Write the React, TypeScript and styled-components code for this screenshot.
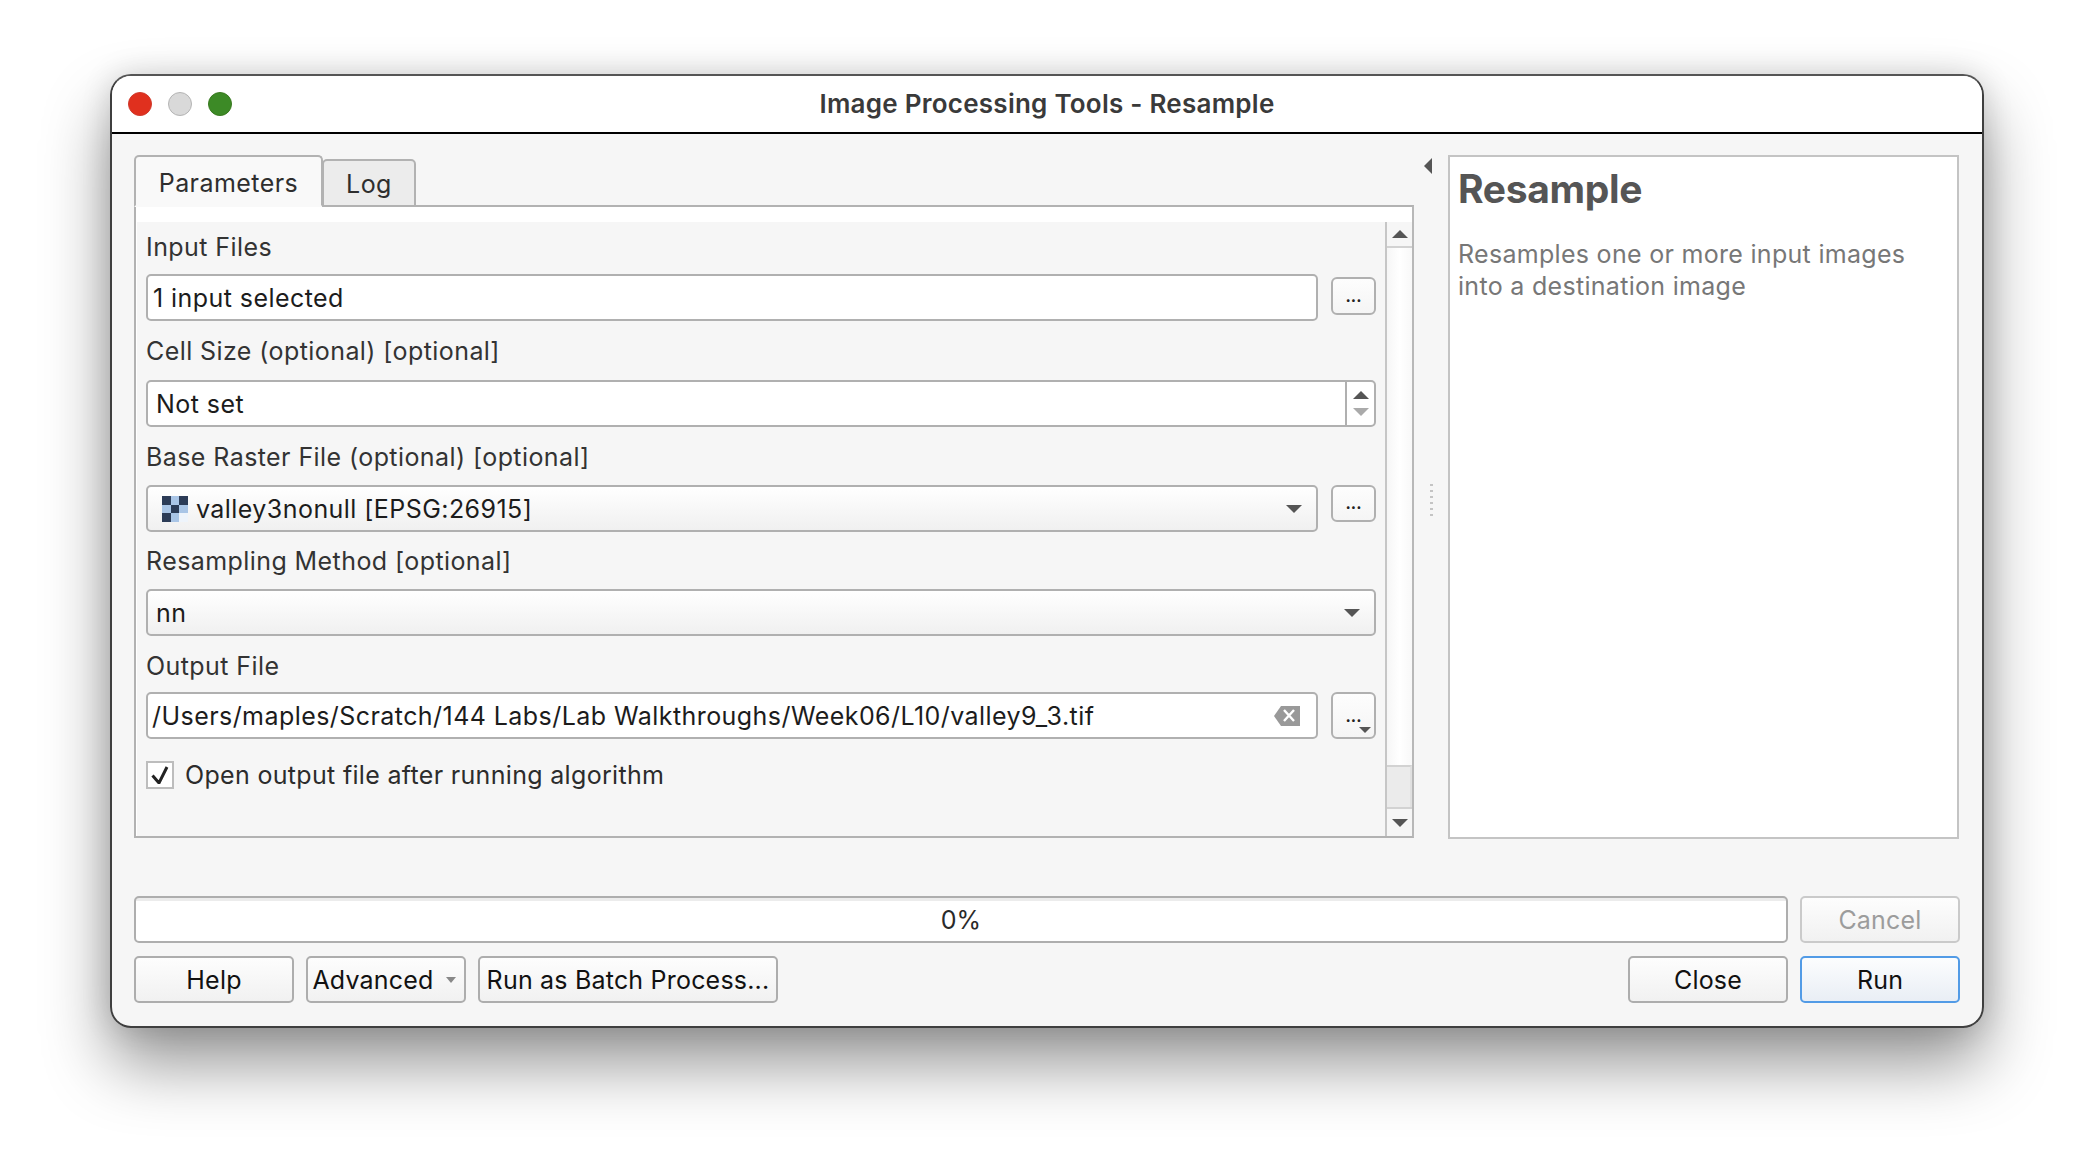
import styled, { createGlobalStyle } from "styled-components";

const GlobalStyle = createGlobalStyle`
  html, body {
    margin: 0;
    background: #fff;
  }
  body {
    font-family: Inter, "Liberation Sans", sans-serif;
    color: #222;
  }
`;

const Page = styled.div`
  width: 2094px;
  height: 1174px;
  box-sizing: border-box;
  padding: 74px 0 0 110px;
  overflow: hidden;
`;

const Window = styled.div`
  width: 1874px;
  height: 954px;
  box-sizing: border-box;
  border: 2px solid #3f3f3f;
  border-top-color: #555;
  border-radius: 21px;
  background: #f6f6f6;
  overflow: hidden;
`;

const WindowShadow = styled.div`
  width: 1874px;
  border-radius: 21px;
  box-shadow: 0 36px 66px rgba(0, 0, 0, 0.42), 0 0 30px rgba(0, 0, 0, 0.14);
`;

const TitleBar = styled.div`
  height: 56px;
  display: grid;
  grid-template-columns: 1fr auto 1fr;
  align-items: center;
  background: #fff;
  border-bottom: 2px solid #000;
  padding-left: 16px;
`;

const Lights = styled.div`
  display: flex;
  gap: 16px;
`;

const Light = styled.span<{ $fill: string; $edge: string }>`
  width: 24px;
  height: 24px;
  box-sizing: border-box;
  border-radius: 50%;
  background: ${(p) => p.$fill};
  border: 1.5px solid ${(p) => p.$edge};
`;

const Title = styled.div`
  font-size: 26px;
  font-weight: 600;
  color: #3a3a3a;
  white-space: nowrap;
  letter-spacing: 0.25px;
  margin: -2px 16px 0 0;
`;

const Body = styled.div`
  padding: 21px 23px 0 22px;
`;

const Main = styled.div`
  display: flex;
  align-items: flex-start;
  height: 683px;
`;

const Left = styled.div`
  width: 1280px;
  height: 683px;
  display: flex;
  flex-direction: column;
`;

const Tabs = styled.div`
  display: flex;
  align-items: flex-end;
  height: 52px;
  margin-bottom: -2px;
  position: relative;
  z-index: 1;
`;

const Tab = styled.div<{ $active?: boolean }>`
  box-sizing: border-box;
  border: 2px solid #b2b2b2;
  border-radius: 5px 5px 0 0;
  font-size: 25px;
  letter-spacing: 0.45px;
  color: #2e2e2e;
  display: flex;
  align-items: center;
  justify-content: center;
  padding-top: ${(p) => (p.$active ? "3px" : "2px")};
  width: ${(p) => (p.$active ? "189px" : "94px")};
  height: ${(p) => (p.$active ? "52px" : "48px")};
  background: ${(p) => (p.$active ? "#f9f9f9" : "#ececec")};
  border-bottom-color: ${(p) => (p.$active ? "#f9f9f9" : "#b2b2b2")};
  margin-left: ${(p) => (p.$active ? "0" : "-1px")};
`;

const Pane = styled.div`
  flex: 1;
  box-sizing: border-box;
  border: 2px solid #b2b2b2;
  border-right-color: #b8b8b8;
  background: #fff;
  padding: 15px 0 0 1px;
  display: flex;
`;

const Form = styled.div`
  flex: 1;
  box-sizing: border-box;
  padding: 10px 9px 0 9px;
  background: #f6f6f6;
`;

const Field = styled.div<{ $top?: number }>`
  margin-top: ${(p) => p.$top ?? 0}px;
`;

const Label = styled.div<{ $gap: number }>`
  height: 30px;
  line-height: 30px;
  font-size: 25px;
  letter-spacing: 0.42px;
  color: #333;
  margin-bottom: ${(p) => p.$gap}px;
  white-space: nowrap;
`;

const Row = styled.div`
  display: flex;
  align-items: flex-start;
  gap: 13px;
`;

const Box = styled.div<{ $pad?: number }>`
  flex: 1;
  min-width: 0;
  height: 47px;
  box-sizing: border-box;
  border: 2px solid #b0b0b0;
  border-radius: 5px;
  background: #fff;
  display: flex;
  align-items: center;
  padding-left: ${(p) => p.$pad ?? 8}px;
  font-size: 25px;
  letter-spacing: 0.44px;
  color: #1c1c1c;
  white-space: nowrap;
`;

const ComboBox = styled(Box)`
  background: linear-gradient(#fff, #f0f0f0);
  justify-content: space-between;
  padding-right: 14px;
`;

const SpinBox = styled(Box)`
  padding-right: 0;
  justify-content: space-between;
`;

const Spinner = styled.div`
  width: 27px;
  height: 100%;
  border-left: 2px solid #b0b0b0;
  display: flex;
  flex-direction: column;
  align-items: center;
  justify-content: center;
  gap: 9px;
`;

const ComboText = styled.span`
  display: flex;
  align-items: center;
  gap: 8px;
`;

const Caret = styled.span<{ $up?: boolean; $w: number; $h: number; $color: string }>`
  display: block;
  flex: none;
  width: 0;
  height: 0;
  border-left: ${(p) => p.$w / 2}px solid transparent;
  border-right: ${(p) => p.$w / 2}px solid transparent;
  ${(p) => (p.$up ? "border-bottom" : "border-top")}: ${(p) => p.$h}px solid ${(p) => p.$color};
`;

const ToolButton = styled.div<{ $h: number; $top?: number; $bottom: number }>`
  position: relative;
  flex: none;
  width: 45px;
  height: ${(p) => p.$h}px;
  margin-top: ${(p) => p.$top ?? 0}px;
  box-sizing: border-box;
  border: 2px solid #b0b0b0;
  border-radius: 6px;
  background: linear-gradient(#fdfdfd, #f5f5f5);
  display: flex;
  align-items: flex-end;
  justify-content: center;
  padding-bottom: ${(p) => p.$bottom}px;
  font-size: 16px;
  font-weight: 700;
  line-height: 1;
  color: #222;
`;

const MenuCaret = styled.span`
  position: absolute;
  right: 3px;
  bottom: 4px;
`;

const ClearIcon = styled.svg`
  flex: none;
  width: 26px;
  height: 20px;
  margin-right: 16px;
`;

const PathText = styled.span`
  flex: 1;
  min-width: 0;
`;

const CheckRow = styled.div`
  display: flex;
  align-items: center;
  gap: 11px;
  margin-top: 21px;
  font-size: 25px;
  letter-spacing: 0.32px;
  color: #2c2c2c;
`;

const CheckMark = styled.div`
  width: 28px;
  height: 28px;
  box-sizing: border-box;
  border: 2px solid #bdbdbd;
  background: #fff;
  display: flex;
  align-items: center;
  justify-content: center;
`;

const ScrollBar = styled.div`
  width: 27px;
  flex: none;
  border-left: 2px solid #c6c6c6;
  box-sizing: border-box;
  display: flex;
  flex-direction: column;
  background: linear-gradient(90deg, #f6f6f6, #fff 50%, #f8f8f8);
`;

const ScrollEnd = styled.div<{ $bottom?: boolean }>`
  height: ${(p) => (p.$bottom ? "29px" : "26px")};
  flex: none;
  display: flex;
  align-items: center;
  justify-content: center;
  box-sizing: border-box;
  background: #f6f6f6;
  ${(p) => (p.$bottom ? "border-top" : "border-bottom")}: 2px solid #d2d2d2;
`;

const ScrollTrack = styled.div`
  flex: 1;
  display: flex;
  flex-direction: column;
  justify-content: flex-end;
`;

const ScrollThumb = styled.div`
  height: 42px;
  box-sizing: border-box;
  background: #ebebeb;
  border-top: 2px solid #d2d2d2;
  border-right: 2px solid #e0e0e0;
`;

const Splitter = styled.div`
  width: 34px;
  flex: none;
  display: flex;
  flex-direction: column;
  align-items: center;
`;

const CollapseArrow = styled.span`
  display: block;
  width: 0;
  height: 0;
  margin: 3px 6px 0 0;
  border-top: 8px solid transparent;
  border-bottom: 8px solid transparent;
  border-right: 8px solid #555;
`;

const GripDots = styled.span`
  width: 3px;
  height: 32px;
  margin-top: 310px;
  background: repeating-linear-gradient(#c4c4c4 0 2px, transparent 2px 6px);
`;

const Side = styled.div`
  flex: 1;
  height: 684px;
  box-sizing: border-box;
  border: 2px solid #c4c4c4;
  background: #fff;
  padding: 9px 8px;
`;

const SideTitle = styled.h1`
  margin: 0;
  font-size: 39px;
  line-height: 46px;
  font-weight: 700;
  letter-spacing: -0.35px;
  color: #555;
`;

const SideText = styled.p`
  margin: 26px 0 0;
  font-size: 25px;
  line-height: 32px;
  letter-spacing: 0.3px;
  color: #777;
`;

const Footer = styled.div`
  margin: 58px -1px 0 0;
  display: flex;
  flex-direction: column;
  gap: 13px;
`;

const FooterRow = styled.div`
  display: flex;
  gap: 12px;
`;

const Progress = styled.div`
  flex: 1;
  height: 47px;
  box-sizing: border-box;
  border: 2px solid #aeaeae;
  border-radius: 5px;
  background: linear-gradient(#ececec 0 3px, #fff 3px);
  display: flex;
  align-items: center;
  justify-content: center;
  padding-top: 1px;
  font-size: 25px;
  letter-spacing: 0.2px;
  color: #2a2a2a;
`;

const Button = styled.div<{ $w: number; $tone?: "run" | "off" }>`
  width: ${(p) => p.$w}px;
  height: 47px;
  box-sizing: border-box;
  border: 2px solid
    ${(p) => (p.$tone === "run" ? "#529be6" : p.$tone === "off" ? "#cacaca" : "#adadad")};
  border-radius: 5px;
  background: ${(p) =>
    p.$tone === "run" ? "linear-gradient(#fcfdfe, #e9eef5)" : "linear-gradient(#fdfdfd, #f1f1f1)"};
  color: ${(p) => (p.$tone === "off" ? "#9c9c9c" : "#111")};
  display: flex;
  align-items: center;
  justify-content: center;
  gap: 12px;
  padding-top: 1px;
  font-size: 25px;
  letter-spacing: 0.2px;
  white-space: nowrap;
`;

const MenuButton = styled(Button)`
  padding-right: 4px;
`;

const Spacer = styled.div`
  flex: 1;
`;

const RasterIcon = () => (
  <svg width="26" height="26" viewBox="0 0 3 3" shapeRendering="crispEdges">
    <rect x="0" y="0" width="1" height="1" fill="#2c3c57" />
    <rect x="1" y="0" width="1" height="1" fill="#a9c5e6" />
    <rect x="2" y="0" width="1" height="1" fill="#2c3c57" />
    <rect x="0" y="1" width="1" height="1" fill="#a9c5e6" />
    <rect x="1" y="1" width="1" height="1" fill="#2c3c57" />
    <rect x="2" y="1" width="1" height="1" fill="#a9c5e6" />
    <rect x="0" y="2" width="1" height="1" fill="#2c3c57" />
    <rect x="1" y="2" width="1" height="1" fill="#a9c5e6" />
    <rect x="2" y="2" width="1" height="1" fill="#eef4fb" />
  </svg>
);

const App = () => {
  return (
    <Page>
      <GlobalStyle />
      <WindowShadow>
        <Window>
          <TitleBar>
            <Lights>
              <Light $fill="#e0301e" $edge="#cf3a2c" />
              <Light $fill="#d9d9d9" $edge="#b4b4b4" />
              <Light $fill="#3c8a26" $edge="#39791f" />
            </Lights>
            <Title>Image Processing Tools - Resample</Title>
          </TitleBar>
          <Body>
            <Main>
              <Left>
                <Tabs>
                  <Tab $active>Parameters</Tab>
                  <Tab>Log</Tab>
                </Tabs>
                <Pane>
                  <Form>
                    <Field>
                      <Label $gap={12}>Input Files</Label>
                      <Row>
                        <Box $pad={5}>1 input selected</Box>
                        <ToolButton $h={38} $top={3} $bottom={9}>...</ToolButton>
                      </Row>
                    </Field>
                    <Field $top={15}>
                      <Label $gap={14}>Cell Size (optional) [optional]</Label>
                      <Row>
                        <SpinBox>
                          Not set
                          <Spinner>
                            <Caret $up $w={16} $h={8} $color="#555" />
                            <Caret $w={16} $h={8} $color="#aaa" />
                          </Spinner>
                        </SpinBox>
                      </Row>
                    </Field>
                    <Field $top={15}>
                      <Label $gap={13}>Base Raster File (optional) [optional]</Label>
                      <Row>
                        <ComboBox $pad={14}>
                          <ComboText>
                            <RasterIcon />
                            valley3nonull [EPSG:26915]
                          </ComboText>
                          <Caret $w={16} $h={8} $color="#555" />
                        </ComboBox>
                        <ToolButton $h={37} $bottom={9}>...</ToolButton>
                      </Row>
                    </Field>
                    <Field $top={14}>
                      <Label $gap={13}>Resampling Method [optional]</Label>
                      <Row>
                        <ComboBox>
                          nn
                          <Caret $w={16} $h={8} $color="#555" />
                        </ComboBox>
                      </Row>
                    </Field>
                    <Field $top={15}>
                      <Label $gap={11}>Output File</Label>
                      <Row>
                        <Box $pad={4}>
                          <PathText>/Users/maples/Scratch/144 Labs/Lab Walkthroughs/Week06/L10/valley9_3.tif</PathText>
                          <ClearIcon viewBox="0 0 26 20">
                            <path d="M0 10 L7 0 H26 V20 H7 Z" fill="#999" />
                            <path d="M10 4 L20 15 M20 4 L10 15" stroke="#fff" strokeWidth="2.4" fill="none" />
                          </ClearIcon>
                        </Box>
                        <ToolButton $h={47} $bottom={13}>
                          ...
                          <MenuCaret>
                            <Caret $w={12} $h={6} $color="#555" />
                          </MenuCaret>
                        </ToolButton>
                      </Row>
                    </Field>
                    <CheckRow>
                      <CheckMark>
                        <svg width="18" height="18" viewBox="0 0 18 18">
                          <path d="M1.5 9.5 L8 17 L16 1" stroke="#222" strokeWidth="3" fill="none" />
                        </svg>
                      </CheckMark>
                      Open output file after running algorithm
                    </CheckRow>
                  </Form>
                  <ScrollBar>
                    <ScrollEnd>
                      <Caret $up $w={16} $h={8} $color="#555" />
                    </ScrollEnd>
                    <ScrollTrack>
                      <ScrollThumb />
                    </ScrollTrack>
                    <ScrollEnd $bottom>
                      <Caret $w={16} $h={8} $color="#555" />
                    </ScrollEnd>
                  </ScrollBar>
                </Pane>
              </Left>
              <Splitter>
                <CollapseArrow />
                <GripDots />
              </Splitter>
              <Side>
                <SideTitle>Resample</SideTitle>
                <SideText>
                  Resamples one or more input images
                  <br />
                  into a destination image
                </SideText>
              </Side>
            </Main>
            <Footer>
              <FooterRow>
                <Progress>0%</Progress>
                <Button $w={160} $tone="off">Cancel</Button>
              </FooterRow>
              <FooterRow>
                <Button $w={160}>Help</Button>
                <MenuButton $w={160}>
                  Advanced
                  <Caret $w={11} $h={6} $color="#888" />
                </MenuButton>
                <Button $w={300}>Run as Batch Process...</Button>
                <Spacer />
                <Button $w={160}>Close</Button>
                <Button $w={160} $tone="run">Run</Button>
              </FooterRow>
            </Footer>
          </Body>
        </Window>
      </WindowShadow>
    </Page>
  );
};

export default App;
